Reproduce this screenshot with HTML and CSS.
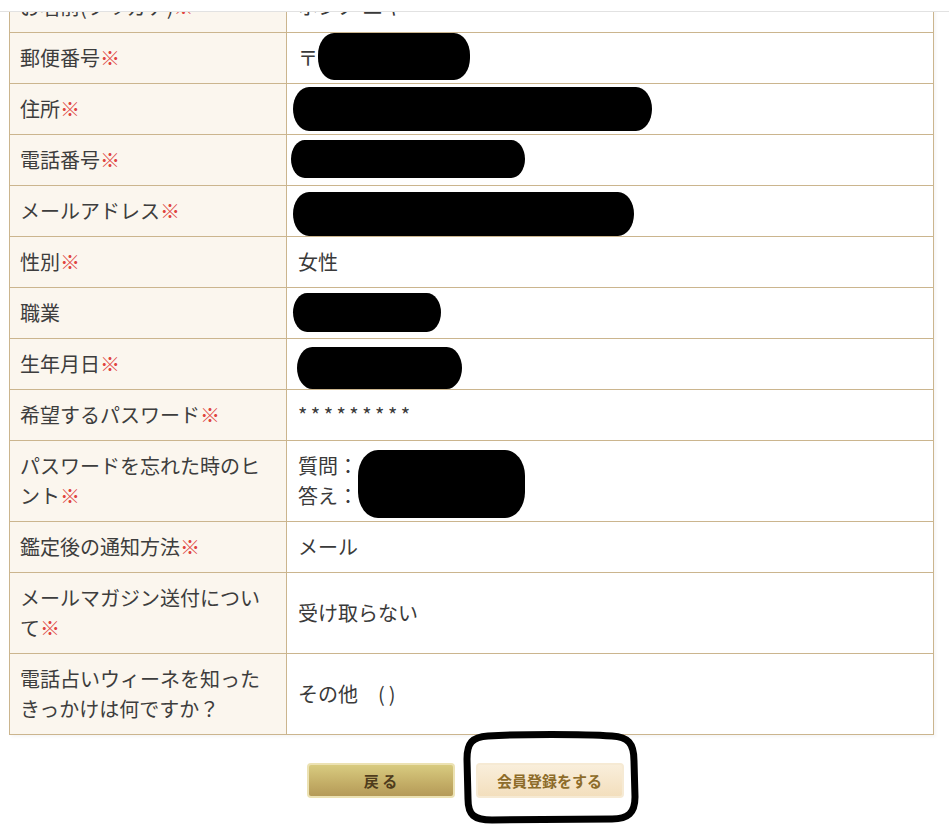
FILE: index.html
```html
<!DOCTYPE html>
<html lang="ja">
<head>
    <meta charset="UTF-8">
    <title>会員登録 確認</title>
    <link rel="stylesheet" href="styles.css">
</head>
<body>
    <div class="topbar"></div>

    <div class="wrap">
        <table class="confirm">
            <colgroup>
                <col class="col-head">
                <col>
            </colgroup>
            <tr>
                <th>お名前(フリガナ)<span class="req">※</span></th>
                <td>ホシノ ユキ</td>
            </tr>
            <tr>
                <th>郵便番号<span class="req">※</span></th>
                <td>〒<span class="blot blot-zip"></span></td>
            </tr>
            <tr>
                <th>住所<span class="req">※</span></th>
                <td><span class="blot blot-addr"></span></td>
            </tr>
            <tr>
                <th>電話番号<span class="req">※</span></th>
                <td><span class="blot blot-tel"></span></td>
            </tr>
            <tr>
                <th>メールアドレス<span class="req">※</span></th>
                <td><span class="blot blot-mail"></span></td>
            </tr>
            <tr>
                <th>性別<span class="req">※</span></th>
                <td>女性</td>
            </tr>
            <tr>
                <th>職業</th>
                <td><span class="blot blot-job"></span></td>
            </tr>
            <tr>
                <th>生年月日<span class="req">※</span></th>
                <td><span class="blot blot-birth"></span></td>
            </tr>
            <tr>
                <th>希望するパスワード<span class="req">※</span></th>
                <td class="stars">*********</td>
            </tr>
            <tr>
                <th>パスワードを忘れた時のヒント<span class="req">※</span></th>
                <td>
                    <div class="hint">
                        <div class="hint-labels">
                            <div>質問：</div>
                            <div>答え：</div>
                        </div>
                        <span class="blot blot-hint"></span>
                    </div>
                </td>
            </tr>
            <tr>
                <th>鑑定後の通知方法<span class="req">※</span></th>
                <td>メール</td>
            </tr>
            <tr>
                <th>メールマガジン送付について<span class="req">※</span></th>
                <td>受け取らない</td>
            </tr>
            <tr>
                <th>電話占いウィーネを知ったきっかけは何ですか？</th>
                <td>その他　<span class="paren">()</span></td>
            </tr>
        </table>

        <div class="actions">
            <button class="btn btn-back">戻 る</button>
            <button class="btn btn-submit">会員登録をする</button>
            <svg class="mark" width="180" height="96" viewBox="0 0 180 96">
                <path d="M26 5 C60 3 120 3 150 5 C166 6 172 12 172 30 L173 66 C173 82 166 88 150 88 L30 89 C12 89 6 84 6 68 L5 28 C5 12 10 6 26 5 Z"
                      fill="none" stroke="#000" stroke-width="7" stroke-linejoin="round"/>
            </svg>
        </div>
    </div>
</body>
</html>
```

FILE: styles.css
```css
body {
    margin: 0;
    background: #fff;
    font-family: "Noto Sans CJK JP", "Noto Sans", sans-serif;
    color: #3a3a3a;
}

.topbar {
    position: fixed;
    top: 0;
    left: 0;
    right: 0;
    height: 11px;
    background: #fff;
    border-bottom: 1px solid #e2e2e2;
    z-index: 5;
}

.wrap {
    padding: 0 9px;
    margin-top: -19px;
}

.confirm {
    width: 925px;
    border-collapse: collapse;
    box-shadow: 2px 2px 3px rgba(0, 0, 0, 0.04);
}

.col-head {
    width: 277px;
}

.confirm th,
.confirm td {
    border: 1px solid #cbb58e;
    padding: 10px 11px;
    font-size: 20px;
    line-height: 30px;
    font-weight: normal;
    text-align: left;
    vertical-align: middle;
}

.confirm th {
    padding-left: 10px;
    background: #fbf6ee;
    color: #3d3d3d;
}

.confirm td {
    background: #fff;
}

.req {
    color: #e0443f;
}

.stars {
    letter-spacing: 3.5px;
    font-size: 15px;
}

.paren {
    letter-spacing: 4px;
}

/* redaction marks: margin box kept at 20px so rows keep their height */
.blot {
    display: inline-block;
    background: #000;
    vertical-align: middle;
    border-radius: 16px / 22px;
}

.blot-zip {
    width: 152px;
    height: 47px;
    margin: -18px 0 -9px 0;
}

.blot-addr {
    width: 359px;
    height: 44px;
    margin: -15px 0 -9px -5px;
}

.blot-tel {
    width: 234px;
    height: 38px;
    margin: -13px 0 -5px -7px;
}

.blot-mail {
    width: 341px;
    height: 44px;
    margin: -12px 0 -12px -5px;
}

.blot-job {
    width: 148px;
    height: 39px;
    margin: -13px 0 -6px -5px;
}

.blot-birth {
    width: 165px;
    height: 42px;
    margin: -10px 0 -12px -1px;
}

.hint {
    display: flex;
    align-items: center;
}

.hint-labels {
    width: 60px;
}

.blot-hint {
    width: 167px;
    height: 68px;
    margin: -1px 0 -7px 0;
    border-radius: 20px / 26px;
}

.actions {
    position: relative;
    display: flex;
    justify-content: center;
    gap: 21px;
    padding: 28px 0 38px;
    margin-right: 19px;
}

.btn {
    width: 148px;
    height: 35px;
    border-radius: 4px;
    font-family: "Noto Sans CJK JP", sans-serif;
    font-size: 15px;
    font-weight: bold;
    cursor: pointer;
}

.btn-back {
    background: linear-gradient(#d8cb80, #c3ad66 60%, #b59a58);
    border: 2px solid #ece2b3;
    color: #4f3c1c;
}

.btn-submit {
    background: linear-gradient(#f9eedb, #f3dfbd);
    border: 2px solid #f6ead4;
    color: #8d6c2a;
}

.mark {
    position: absolute;
    left: 453px;
    top: -4px;
}
```
